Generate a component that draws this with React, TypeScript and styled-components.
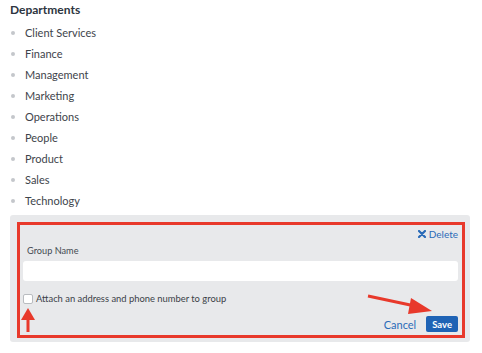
import React from "react";
import styled, { createGlobalStyle } from "styled-components";

const GlobalStyle = createGlobalStyle`
  body {
    margin: 0;
    background: #ffffff;
    font-family: Lato, "Liberation Sans", Arial, sans-serif;
    color: #3b4148;
  }
`;

const Page = styled.div`
  padding: 2px 12px 0 10px;
  width: 460px;
`;

const Heading = styled.h2`
  margin: 0;
  font-size: 12px;
  font-weight: 700;
  color: #2d3540;
  line-height: 16px;
`;

const DeptList = styled.ul`
  list-style: none;
  margin: 4px 0 0;
  padding: 0;
`;

const DeptItem = styled.li`
  display: flex;
  align-items: center;
  height: 21px;
  font-size: 11px;
  color: #3e444b;
  &::before {
    content: "";
    width: 4px;
    height: 4px;
    border-radius: 50%;
    background: #c4c7cb;
    margin: 0 10px 0 1px;
  }
`;

const Panel = styled.div`
  position: relative;
  margin-top: 4px;
  background: #e8e9eb;
  border-radius: 3px;
  padding: 7px 5px 4px 7px;
`;

const Highlight = styled.div`
  border: 3px solid #e8392b;
  padding: 3px 4px 3px 3px;
`;

const TopRow = styled.div`
  display: flex;
  justify-content: flex-end;
  height: 12px;
`;

const DeleteLink = styled.a`
  display: flex;
  align-items: center;
  gap: 3px;
  font-size: 10px;
  color: #2a6bb8;
  text-decoration: none;
`;

const FieldLabel = styled.label`
  display: block;
  margin: 5px 0 0 4px;
  font-size: 9.2px;
  color: #444a51;
`;

const TextInput = styled.div`
  height: 20px;
  margin-top: 5px;
  background: #ffffff;
  border-radius: 3px;
`;

const CheckRow = styled.label`
  display: flex;
  align-items: center;
  gap: 3px;
  margin-top: 12px;
  font-size: 9.4px;
  color: #3b4148;
`;

const CheckBox = styled.span`
  width: 8px;
  height: 8px;
  border: 1px solid #b9bcc0;
  border-radius: 2px;
  background: #ffffff;
`;

const ActionRow = styled.div`
  display: flex;
  justify-content: flex-end;
  align-items: center;
  gap: 10px;
  margin-top: 12px;
`;

const CancelLink = styled.span`
  font-size: 11px;
  color: #2a6bb8;
`;

const SaveButton = styled.button`
  height: 16px;
  padding: 0 6px;
  border: none;
  border-radius: 2px;
  background: #1f63b5;
  color: #ffffff;
  font-family: inherit;
  font-weight: 700;
  font-size: 9.5px;
`;

const ArrowLayer = styled.svg`
  position: absolute;
  left: 0;
  top: 0;
  pointer-events: none;
`;

const departments = [
  "Client Services",
  "Finance",
  "Management",
  "Marketing",
  "Operations",
  "People",
  "Product",
  "Sales",
  "Technology",
];

export default function App() {
  return (
    <>
      <GlobalStyle />
      <Page>
        <Heading>Departments</Heading>
        <DeptList>
          {departments.map((d) => (
            <DeptItem key={d}>{d}</DeptItem>
          ))}
        </DeptList>
        <Panel>
          <Highlight>
            <TopRow>
              <DeleteLink>
                <svg width="8" height="8" viewBox="0 0 8 8">
                  <path d="M1 1 L7 7 M7 1 L1 7" stroke="#2a6bb8" strokeWidth="2.2" strokeLinecap="round" />
                </svg>
                Delete
              </DeleteLink>
            </TopRow>
            <FieldLabel>Group Name</FieldLabel>
            <TextInput />
            <CheckRow>
              <CheckBox />
              Attach an address and phone number to group
            </CheckRow>
            <ActionRow>
              <CancelLink>Cancel</CancelLink>
              <SaveButton>Save</SaveButton>
            </ActionRow>
          </Highlight>
          <ArrowLayer width="460" height="128" viewBox="0 0 460 128">
            <line x1="18" y1="117" x2="18" y2="104" stroke="#e8392b" strokeWidth="3" />
            <polygon points="11,105 25,105 18,93" fill="#e8392b" />
            <line x1="358" y1="81" x2="405" y2="91" stroke="#e8392b" strokeWidth="3" />
            <polygon points="401,83 398,99 422,96" fill="#e8392b" />
          </ArrowLayer>
        </Panel>
      </Page>
    </>
  );
}
